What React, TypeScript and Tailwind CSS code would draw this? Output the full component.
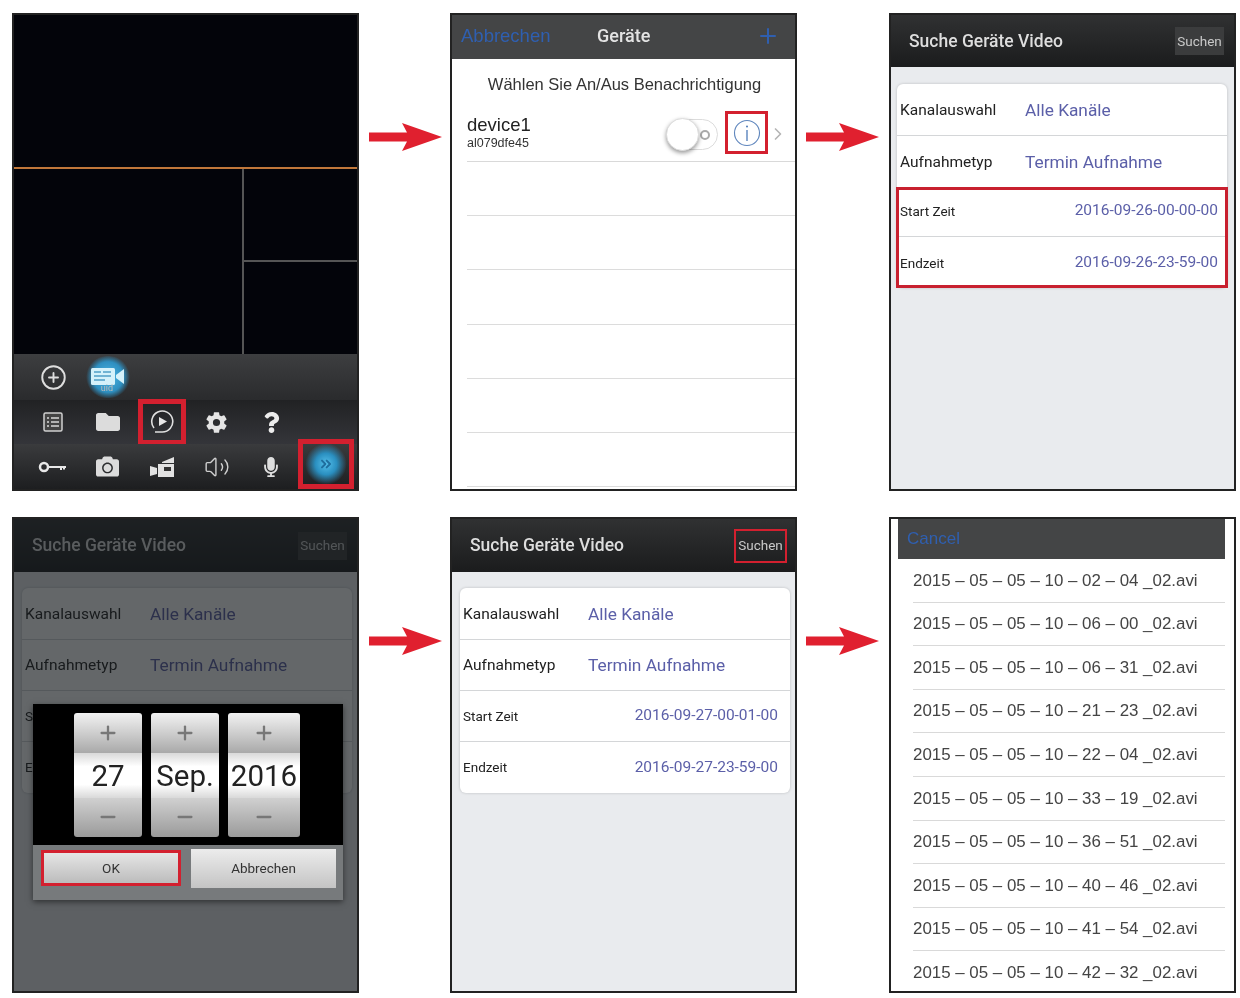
import React from "react";
import { CirclePlus, Volume2, ChevronRight, ChevronsRight, Plus, Minus } from "lucide-react";
import { FaFolder, FaCamera, FaQuestion, FaMicrophone } from "react-icons/fa";
import { IoSettingsSharp } from "react-icons/io5";

const Arrow = ({ className }: { className: string }) => (
  <div className={`shrink-0 pt-[110px] ${className}`}>
    <svg width="73" height="28" viewBox="0 0 73 28" className="block">
      <path d="M0 9.5 H38 L33 0 L73 14 L33 28 L38 18.500 H0 Z" fill="#e0202f" />
    </svg>
  </div>
);

const Panel = ({ children, className = "" }: { children: React.ReactNode; className?: string }) => (
  <div className={`w-[347px] shrink-0 border-2 border-[#222] flex flex-col overflow-hidden relative ${className}`}>
    {children}
  </div>
);

const Cell = ({ children }: { children?: React.ReactNode }) => (
  <div className="flex items-center justify-center h-full">{children}</div>
);

const Key = () => (
  <svg width="30" height="14" viewBox="0 0 30 14">
    <circle cx="6" cy="7" r="4" fill="none" stroke="#e8e8e8" strokeWidth="2.5" />
    <path d="M10 7 H28 M23 7 V10 M26 7 V9.500" stroke="#e8e8e8" strokeWidth="2" fill="none" />
  </svg>
);

const ListIcon = () => (
  <svg width="20" height="20" viewBox="0 0 20 20">
    <rect x="1" y="1" width="18" height="18" rx="1.500" fill="#444" stroke="#cfcfcf" strokeWidth="1.500" />
    <path d="M4 6 H6 M8 6 H16 M4 10 H6 M8 10 H16 M4 14 H6 M8 14 H16" stroke="#d8d8d8" strokeWidth="1.500" />
  </svg>
);

const Replay = () => (
  <svg width="26" height="26" viewBox="0 0 26 26" fill="none">
    <path d="M5 19 A10.500 10.500 0 1 1 13 23 H6" stroke="#e0e0e0" strokeWidth="1.600" />
    <path d="M10 8 L18 12.500 L10 17 Z" fill="#e8e8e8" />
  </svg>
);

const Camcorder = () => (
  <svg width="26" height="24" viewBox="0 0 26 24">
    <path d="M9 9 H25 V22 H9 Z" fill="#e2e2e2" />
    <path d="M1 11 L8 13 V19 L1 21 Z" fill="#e2e2e2" />
    <path d="M13 7 L25 2 V8 H13 Z" fill="#e2e2e2" />
    <rect x="15" y="12" width="7" height="4" fill="#333" />
  </svg>
);

const UidCam = () => (
  <svg width="36" height="22" viewBox="0 0 36 22">
    <rect x="1" y="2" width="24" height="17" rx="1.500" fill="#d4f1fa" />
    <path d="M4 6 H11 M13 6 H21 M4 10 H21 M4 14 H15" stroke="#4f9fc6" strokeWidth="1.500" />
    <path d="M26 9 L34 3 V18 L26 12 Z" fill="#d4f1fa" />
  </svg>
);

const InfoGlyph = () => (
  <svg width="28" height="28" viewBox="0 0 28 28" fill="none">
    <circle cx="14" cy="14" r="12.500" stroke="#5f86bd" strokeWidth="1.100" />
    <path d="M14 11 V22" stroke="#4d7ab8" strokeWidth="1.300" />
    <circle cx="14" cy="7.500" r="1" fill="#4d7ab8" />
  </svg>
);

const MainPanel = () => (
  <Panel className="h-[478px] bg-black">
    <div className="h-[154px] shrink-0 border-b-2 border-[#c0773a] bg-[#03040a]" />
    <div className="h-[185px] shrink-0 flex bg-[#03040a]">
      <div className="w-[230px] border-r-2 border-[#555]" />
      <div className="flex-1 flex flex-col">
        <div className="h-[93px] border-b-2 border-[#555]" />
      </div>
    </div>
    <div className="h-[135px] shrink-0 flex flex-col bg-[#2b2c2e] font-['Roboto',sans-serif]">
      <div className="h-[46px] shrink-0 bg-[linear-gradient(#3d3e40,#2a2b2d)] grid grid-cols-[repeat(6,54.500px)] grid-rows-[46px] pl-[12px]">
        <Cell><CirclePlus size={27} color="#dedede" strokeWidth={1.700} /></Cell>
        <Cell>
          <div className="relative w-[44px] h-[42px] rounded-full bg-[radial-gradient(circle,#4fb8e6_0%,#2e8fc0_50%,rgba(40,90,120,0)_72%)] flex items-center justify-center">
            <UidCam />
            <span className="absolute left-[15px] top-[28px] text-[9px] leading-none text-[#bbb]">uid</span>
          </div>
        </Cell>
      </div>
      <div className="h-[44px] shrink-0 bg-[linear-gradient(#212224,#34353a)] grid grid-cols-[repeat(6,54.500px)] grid-rows-[44px] pl-[12px]">
        <Cell><ListIcon /></Cell>
        <Cell><FaFolder size={24} color="#dcdcdc" /></Cell>
        <Cell>
          <div className="w-[48px] h-[46px] shrink-0 border-[5px] border-[#d3202f] flex items-center justify-center">
            <Replay />
          </div>
        </Cell>
        <Cell><IoSettingsSharp size={23} color="#e5e5e5" /></Cell>
        <Cell><FaQuestion size={21} color="#ececec" /></Cell>
      </div>
      <div className="h-[45px] shrink-0 bg-[linear-gradient(#3a3b3d,#1d1e20)] grid grid-cols-[repeat(6,54.500px)] grid-rows-[45px] pl-[12px]">
        <Cell><Key /></Cell>
        <Cell><FaCamera size={23} color="#dcdcdc" /></Cell>
        <Cell><Camcorder /></Cell>
        <Cell><Volume2 size={26} color="#cfcfcf" strokeWidth={1.300} /></Cell>
        <Cell><FaMicrophone size={20} color="#dedede" /></Cell>
        <Cell>
          <div className="w-[56px] h-[50px] shrink-0 border-[5px] border-[#d3202f] flex items-center justify-center -translate-y-[3px] bg-[radial-gradient(circle,#55c0ec_0%,#2a8fc0_35%,rgba(40,90,120,0)_68%)]">
            <ChevronsRight size={16} color="#1f6e9e" strokeWidth={3} />
          </div>
        </Cell>
      </div>
    </div>
  </Panel>
);

const lines = [0, 1, 2, 3, 4, 5];

const DevicesPanel = () => (
  <Panel className="h-[478px] bg-white font-['Liberation_Sans',sans-serif]">
    <div className="h-[44px] shrink-0 bg-[#444546] flex items-center justify-between pl-[9px] pr-[15px] pb-[3px] relative">
      <span className="text-[18.500px] text-[#2f5fb0]">Abbrechen</span>
      <span className="absolute left-[145px] text-[18px] text-[#e3e3e3] font-['Roboto',sans-serif] font-medium">Geräte</span>
      <Plus size={24} color="#2f5fb0" strokeWidth={2} />
    </div>
    <div className="h-[47px] shrink-0 flex items-center justify-center pl-[2px] pt-[3px] text-[16.500px] text-[#333]">
      Wählen Sie An/Aus Benachrichtigung
    </div>
    <div className="h-[56px] shrink-0 ml-[15px] border-b border-[#d9d9d9] flex items-center relative">
      <div className="flex flex-col leading-none -mt-[2px]">
        <span className="text-[18.500px] text-[#222]">device1</span>
        <span className="text-[12.500px] text-[#333] mt-[2px]">al079dfe45</span>
      </div>
      <div className="absolute left-[199px] top-[13px] w-[52px] h-[31px] rounded-full border border-[#dcdcdc] bg-white flex items-center justify-end pr-[7px]">
        <div className="w-[10px] h-[10px] rounded-full border-2 border-[#aaa]" />
      </div>
      <div className="absolute left-[199px] top-[12px] w-[33px] h-[33px] rounded-full bg-white shadow-[0_2px_4px_rgba(0,0,0,0.4)] border border-[#ddd]" />
      <div className="absolute left-[258px] top-[5px] w-[43px] h-[43px] border-[3px] border-[#d3202f] flex items-center justify-center">
        <InfoGlyph />
      </div>
      <ChevronRight size={20} color="#b5b5b5" className="absolute left-[301px] top-[18px]" />
    </div>
    {lines.map((i) => (
      <div key={i} className="h-[54.200px] shrink-0 ml-[15px] border-b border-[#dcdcdc]" />
    ))}
  </Panel>
);

const Row = ({ label, value, small, last, first }: { label: string; value: string; small?: boolean; last?: boolean; first?: boolean }) => (
  <div
    className={`flex items-center ${first ? "h-[52px]" : "h-[51px]"} ${small ? "justify-between" : "pt-[2px]"} pl-[3px] pr-[12px] ${last ? "" : "border-b border-[#d4d6d8]"}`}
  >
    <span className={small ? "text-[13.500px] text-[#222]" : "w-[125px] text-[15.500px] text-[#222]"}>{label}</span>
    <span className={small ? "text-[15.500px] text-[#5b5fa8]" : "text-[17.300px] text-[#5b5fa8]"}>{value}</span>
  </div>
);

const BoxRow = ({ label, value, top }: { label: string; value: string; top?: boolean }) => (
  <div
    className={`flex items-center justify-between pl-[1px] pr-[7px] ${top ? "h-[47px] pb-[4px] border-b border-[#d4d6d8]" : "h-[48px] pt-[4px]"}`}
  >
    <span className="text-[13.500px] text-[#222]">{label}</span>
    <span className="text-[15.500px] text-[#5b5fa8]">{value}</span>
  </div>
);

const SearchHeader = ({ button, className }: { button: React.ReactNode; className: string }) => (
  <div className={`shrink-0 bg-[linear-gradient(#303132,#1b1c1d)] flex items-center justify-between pl-[18px] pr-[10px] ${className}`}>
    <span className="text-[17.500px] font-medium text-[#dedede]">Suche Geräte Video</span>
    {button}
  </div>
);

const SearchCard = ({ start, end, outlined, className }: { start: string; end: string; outlined?: boolean; className: string }) => (
  <div className={`w-[330px] bg-white rounded-[6px] shadow-[0_0_3px_rgba(0,0,0,0.2)] ${className}`}>
    <Row label="Kanalauswahl" value="Alle Kanäle" first />
    <Row label="Aufnahmetyp" value="Termin Aufnahme" last={outlined} />
    {outlined ? (
      <div className="border-[3px] border-[#c8202f] -ml-[1px] -mr-[1px]">
        <BoxRow label="Start Zeit" value={start} top />
        <BoxRow label="Endzeit" value={end} />
      </div>
    ) : (
      <>
        <Row label="Start Zeit" value={start} small />
        <Row label="Endzeit" value={end} small last />
      </>
    )}
  </div>
);

const SearchPanel = () => (
  <Panel className="h-[478px] bg-[#e9ebee] font-['Roboto',sans-serif]">
    <SearchHeader
      className="h-[52px]"
      button={<div className="w-[49px] h-[28px] bg-[#3b3c3d] flex items-center justify-center text-[13.500px] text-[#c9c9c9]">Suchen</div>}
    />
    <SearchCard className="mt-[17px] ml-[6px]" start="2016-09-26-00-00-00" end="2016-09-26-23-59-00" outlined />
  </Panel>
);

const Spinner = ({ value, width }: { value: string; width: string }) => (
  <div className={`${width} h-[124px] rounded-[3px] overflow-hidden flex flex-col`}>
    <div className="h-[40px] bg-[linear-gradient(#f2f2f2,#a9a9a9)] flex items-center justify-center">
      <Plus size={22} color="#777" strokeWidth={2.500} />
    </div>
    <div className="h-[45px] pt-[2px] bg-[linear-gradient(#d9d9d9,#ffffff_30%,#ffffff_70%,#d9d9d9)] flex items-center justify-center text-[29.500px] text-[#222]">
      {value}
    </div>
    <div className="flex-1 bg-[linear-gradient(#d0d0d0,#9a9a9a)] flex items-center justify-center">
      <Minus size={22} color="#777" strokeWidth={2.500} />
    </div>
  </div>
);

const DialogPanel = () => (
  <Panel className="h-[476px] bg-[#e9ebee] font-['Roboto',sans-serif]">
    <SearchHeader
      className="h-[53px]"
      button={<div className="w-[49px] h-[28px] bg-[#3b3c3d] flex items-center justify-center text-[13.500px] text-[#c9c9c9]">Suchen</div>}
    />
    <SearchCard className="mt-[16px] ml-[8px]" start="" end="" />
    <div className="absolute inset-0 bg-[rgba(20,24,28,0.66)]" />
    <div className="absolute left-[19px] top-[185px] w-[310px] h-[196px] flex flex-col shadow-[0_2px_6px_rgba(0,0,0,0.5)]">
      <div className="h-[141px] bg-black flex items-center pl-[41px] gap-[9px]">
        <Spinner value="27" width="w-[68px]" />
        <Spinner value="Sep." width="w-[68px]" />
        <Spinner value="2016" width="w-[72px]" />
      </div>
      <div className="flex-1 bg-[#777a7c] flex items-start pt-[5px] pl-[8px] gap-[10px]">
        <div className="w-[140px] h-[36px] border-[3px] border-[#d3202f] bg-[linear-gradient(#e5e5e5,#bcbcbc)] flex items-center justify-center text-[13.500px] text-[#333]">
          OK
        </div>
        <div className="w-[145px] h-[39px] -mt-[1px] bg-[linear-gradient(#ececec,#c4c4c4)] flex items-center justify-center text-[13.500px] text-[#333]">
          Abbrechen
        </div>
      </div>
    </div>
  </Panel>
);

const ResultPanel = () => (
  <Panel className="h-[476px] bg-[#e9ebee] font-['Roboto',sans-serif]">
    <SearchHeader
      className="h-[53px]"
      button={<div className="w-[53px] h-[34px] border-[2px] border-[#d3202f] flex items-center justify-center text-[13.500px] text-[#c9c9c9] -mr-[2px]">Suchen</div>}
    />
    <SearchCard className="mt-[16px] ml-[8px]" start="2016-09-27-00-01-00" end="2016-09-27-23-59-00" />
  </Panel>
);

const files = [
  "10 – 02 – 04",
  "10 – 06 – 00",
  "10 – 06 – 31",
  "10 – 21 – 23",
  "10 – 22 – 04",
  "10 – 33 – 19",
  "10 – 36 – 51",
  "10 – 40 – 46",
  "10 – 41 – 54",
  "10 – 42 – 32",
];

const FilesPanel = () => (
  <Panel className="h-[476px] bg-white font-['Liberation_Sans',sans-serif]">
    <div className="h-[40px] shrink-0 ml-[7px] mr-[9px] bg-[#444546] flex items-center pl-[9px] text-[17px] text-[#2f5fb0]">
      Cancel
    </div>
    {files.map((f, i) => (
      <div
        key={f}
        className={`h-[43.600px] shrink-0 ml-[22px] mr-[9px] flex items-center text-[16.900px] text-[#444] ${i === 9 ? "" : "border-b border-[#d9d9d9]"}`}
      >
        2015 – 05 – 05 – {f} _02.avi
      </div>
    ))}
  </Panel>
);

export default function App() {
  return (
    <div className="w-[1240px] h-[998px] bg-white pt-[13px] pl-[12px] flex flex-col gap-[26px] overflow-hidden blur-[0.6px]">
      <div className="flex">
        <MainPanel />
        <Arrow className="w-[91px] pl-[10px]" />
        <DevicesPanel />
        <Arrow className="w-[92px] pl-[9px]" />
        <SearchPanel />
      </div>
      <div className="flex">
        <DialogPanel />
        <Arrow className="w-[91px] pl-[10px]" />
        <ResultPanel />
        <Arrow className="w-[92px] pl-[9px]" />
        <FilesPanel />
      </div>
    </div>
  );
}
